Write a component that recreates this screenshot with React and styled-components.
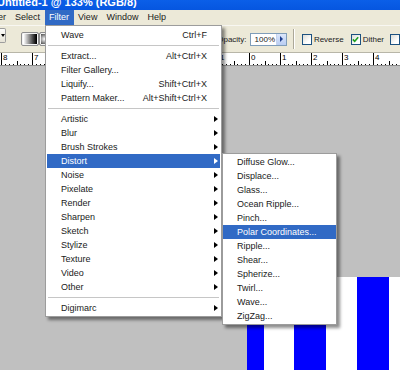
import React from 'react';
import styled, { createGlobalStyle } from 'styled-components';

const Global = createGlobalStyle`
  html, body { margin: 0; padding: 0; }
  body {
    width: 400px; height: 370px; overflow: hidden;
    background: #c0c0c0;
    font-family: "Liberation Sans", Arial, sans-serif;
  }
  #root { width: 400px; height: 370px; }
  * { box-sizing: border-box; }
`;

const Window = styled.div`
  position: relative;
  width: 400px;
  height: 370px;
  display: flex;
  flex-direction: column;
  overflow: hidden;
`;

const TitleBar = styled.div`
  height: 10px;
  flex-shrink: 0;
  background: linear-gradient(#0b5fe8, #0656e0);
  overflow: hidden;
  display: flex;
`;

const TitleText = styled.span`
  font: bold 11px/11px "Liberation Sans", Arial, sans-serif;
  color: #fff;
  margin: -3px 0 0 -3px;
  white-space: nowrap;
`;

const MenuBar = styled.div`
  height: 15px;
  flex-shrink: 0;
  background: #ece9d8;
  display: flex;
  white-space: nowrap;
`;

const MenuTitle = styled.div`
  padding: 0 4.5px;
  font-size: 9px;
  line-height: 15px;
  color: ${p => (p.$active ? '#fff' : '#1a1a1a')};
  background: ${p => (p.$active ? '#316ac5' : 'transparent')};
  &:first-child { margin-left: -21px; }
`;

const Toolbar = styled.div`
  height: 27px;
  flex-shrink: 0;
  background: #ece9d8;
  border-top: 1px solid #f8f7f2;
  display: flex;
  align-items: center;
  white-space: nowrap;
  overflow: hidden;
  font-size: 8px;
  color: #1a1a1a;
`;

const PresetArrow = styled.div`
  width: 7px;
  height: 15px;
  align-self: flex-start;
  margin-top: 2px;
  border: 1px solid #9d9d9d;
  border-left: none;
  border-radius: 0 2px 2px 0;
  background: linear-gradient(#fdfdfb, #e6e3d6);
  display: flex;
  align-items: center;
  justify-content: center;
  &::after {
    content: '';
    border-top: 3px solid #000;
    border-left: 2.5px solid transparent;
    border-right: 2.5px solid transparent;
  }
`;

const GradientButton = styled.div`
  width: 19px;
  height: 14px;
  border: 1px solid #8e8e8e;
  border-radius: 2px;
  box-shadow: inset 0 0 0 1px #f4f4f4;
  background: ${p =>
    p.$radial
      ? 'radial-gradient(circle at 30% 50%, #fff 0, #000 70%)'
      : 'linear-gradient(to right, #fff 10%, #000 90%)'};
  margin-left: ${p => (p.$radial ? '0' : '15px')};
`;

const OpacityLabel = styled.span`
  margin-left: 161px;
  font-size: 8px;
`;

const OpacityField = styled.div`
  margin-left: 3px;
  width: 41px;
  height: 13px;
  border: 1px solid #7f9db9;
  background: #fff;
  display: flex;
  align-items: center;
  font-size: 8px;
`;

const FieldValue = styled.span`
  padding-left: 4px;
`;

const FieldArrow = styled.div`
  margin-left: auto;
  width: 10px;
  height: 11px;
  background: linear-gradient(#dbe6fb, #b9cdf3);
  border-left: 1px solid #c5d3ee;
  display: flex;
  align-items: center;
  justify-content: center;
  &::after {
    content: '';
    border-left: 3px solid #1f3f8f;
    border-top: 3px solid transparent;
    border-bottom: 3px solid transparent;
  }
`;

const ToolSeparator = styled.div`
  margin-left: 6px;
  width: 2px;
  height: 20px;
  border-left: 1px solid #aca899;
  border-right: 1px solid #fff;
`;

const CheckBox = styled.div`
  margin-left: ${p => p.$gap}px;
  width: 10px;
  height: 11px;
  flex-shrink: 0;
  border: 1px solid #1c5180;
  background: linear-gradient(135deg, #dcdcd6, #fff 70%);
  display: flex;
  align-items: center;
  justify-content: center;
`;

const CheckLabel = styled.span`
  margin-left: 2px;
  font-size: 8px;
`;

const RulerBar = styled.div`
  height: 14px;
  flex-shrink: 0;
  background: #fff;
  border-top: 1px solid #b8b6a8;
  border-bottom: 1px solid #8c8c8c;
  display: flex;
`;

const Canvas = styled.div`
  flex: 1;
  background: #c0c0c0;
  display: flex;
  padding: 211px 0 0 247px;
`;

const Document = styled.div`
  flex: 1;
  background: #fff;
  display: flex;
`;

const Menu = styled.div`
  position: absolute;
  left: ${p => p.$left}px;
  top: ${p => p.$top}px;
  width: ${p => p.$width}px;
  background: #fff;
  border: 1px solid #9c9c9c;
  padding: ${p => p.$pad};
  box-shadow: 3px 3px 3px rgba(0, 0, 0, 0.45);
  display: flex;
  flex-direction: column;
  z-index: ${p => p.$z};
`;

const Item = styled.div`
  height: 14px;
  display: flex;
  align-items: center;
  padding: 0 2px 0 ${p => p.$indent}px;
  font-size: 9px;
  white-space: nowrap;
  color: ${p => (p.$active ? '#fff' : '#1a1a1a')};
  background: ${p => (p.$active ? '#316ac5' : 'transparent')};
`;

const ItemLabel = styled.span`
  flex: 1;
`;

const Shortcut = styled.span`
  margin-right: 11px;
`;

const SubArrow = styled.span`
  width: 0;
  height: 0;
  border-left: 4px solid ${p => (p.$active ? '#fff' : '#000')};
  border-top: 3px solid transparent;
  border-bottom: 3px solid transparent;
`;

const Separator = styled.div`
  height: 7px;
  display: flex;
  align-items: center;
  padding: 0 1px;
  &::after {
    content: '';
    flex: 1;
    height: 1px;
    background: #c6c6c6;
  }
`;

const Ruler = () => {
  const lines = [];
  for (let k = 0; k <= 12; k++) {
    const x = 1 + 31 * k;
    const label = k <= 8 ? 8 - k : k - 8;
    lines.push(<line key={'m' + k} x1={x + 0.5} y1="0" x2={x + 0.5} y2="13" stroke="#000" strokeWidth="1" />);
    lines.push(
      <text key={'t' + k} x={x + 2} y="7" fontSize="8" fontFamily="Liberation Sans, Arial, sans-serif" fill="#000">
        {label}
      </text>
    );
    for (let j = 1; j < 8; j++) {
      const tx = Math.round(x + (31 * j) / 8) + 0.5;
      const len = j === 4 ? 5 : 2;
      lines.push(<line key={'n' + k + '-' + j} x1={tx} y1={13 - len} x2={tx} y2="13" stroke="#000" strokeWidth="1" />);
    }
  }
  return (
    <svg width="400" height="12" viewBox="0 0 400 12" style={{ display: 'block' }}>
      {lines}
    </svg>
  );
};

const Check = () => (
  <svg width="7" height="7" viewBox="0 0 7 7">
    <path d="M0.8 3.4 L2.7 5.3 L6.2 1.3" fill="none" stroke="#21a121" strokeWidth="1.6" />
  </svg>
);

const Stripes = () => (
  <svg width="153" height="93" viewBox="0 0 153 93" style={{ display: 'block' }}>
    <rect x="0" y="0" width="17" height="93" fill="#0000ff" />
    <rect x="47" y="0" width="32" height="93" fill="#0000ff" />
    <rect x="110" y="0" width="32" height="93" fill="#0000ff" />
  </svg>
);

const mainItems = [
  { label: 'Wave', shortcut: 'Ctrl+F' },
  'sep',
  { label: 'Extract...', shortcut: 'Alt+Ctrl+X' },
  { label: 'Filter Gallery...' },
  { label: 'Liquify...', shortcut: 'Shift+Ctrl+X' },
  { label: 'Pattern Maker...', shortcut: 'Alt+Shift+Ctrl+X' },
  'sep',
  { label: 'Artistic', sub: true },
  { label: 'Blur', sub: true },
  { label: 'Brush Strokes', sub: true },
  { label: 'Distort', sub: true, active: true },
  { label: 'Noise', sub: true },
  { label: 'Pixelate', sub: true },
  { label: 'Render', sub: true },
  { label: 'Sharpen', sub: true },
  { label: 'Sketch', sub: true },
  { label: 'Stylize', sub: true },
  { label: 'Texture', sub: true },
  { label: 'Video', sub: true },
  { label: 'Other', sub: true },
  'sep',
  { label: 'Digimarc', sub: true },
];

const subItems = [
  'Diffuse Glow...',
  'Displace...',
  'Glass...',
  'Ocean Ripple...',
  'Pinch...',
  'Polar Coordinates...',
  'Ripple...',
  'Shear...',
  'Spherize...',
  'Twirl...',
  'Wave...',
  'ZigZag...',
];

export default function App() {
  return (
    <Window>
      <Global />
      <TitleBar>
        <TitleText>Untitled-1 @ 133% (RGB/8)</TitleText>
      </TitleBar>
      <MenuBar>
        <MenuTitle>Layer</MenuTitle>
        <MenuTitle>Select</MenuTitle>
        <MenuTitle $active>Filter</MenuTitle>
        <MenuTitle>View</MenuTitle>
        <MenuTitle>Window</MenuTitle>
        <MenuTitle>Help</MenuTitle>
      </MenuBar>
      <Toolbar>
        <PresetArrow />
        <GradientButton />
        <GradientButton $radial />
        <OpacityLabel>Opacity:</OpacityLabel>
        <OpacityField>
          <FieldValue>100%</FieldValue>
          <FieldArrow />
        </OpacityField>
        <ToolSeparator />
        <CheckBox $gap={7} />
        <CheckLabel>Reverse</CheckLabel>
        <CheckBox $gap={7}>
          <Check />
        </CheckBox>
        <CheckLabel>Dither</CheckLabel>
        <CheckBox $gap={6} />
      </Toolbar>
      <RulerBar>
        <Ruler />
      </RulerBar>
      <Canvas>
        <Document>
          <Stripes />
        </Document>
      </Canvas>

      <Menu $left={45} $top={25} $width={177} $pad="2px 1px 1px 1px" $z={2}>
        {mainItems.map((it, i) =>
          it === 'sep' ? (
            <Separator key={i} />
          ) : (
            <Item key={i} $indent={14} $active={it.active}>
              <ItemLabel>{it.label}</ItemLabel>
              {it.shortcut && <Shortcut>{it.shortcut}</Shortcut>}
              {it.sub && <SubArrow $active={it.active} />}
            </Item>
          )
        )}
      </Menu>

      <Menu $left={222} $top={153} $width={115} $pad="1px 0 1px 0" $z={3}>
        {subItems.map((label, i) => (
          <Item key={i} $indent={14} $active={label === 'Polar Coordinates...'}>
            <ItemLabel>{label}</ItemLabel>
          </Item>
        ))}
      </Menu>
    </Window>
  );
}
